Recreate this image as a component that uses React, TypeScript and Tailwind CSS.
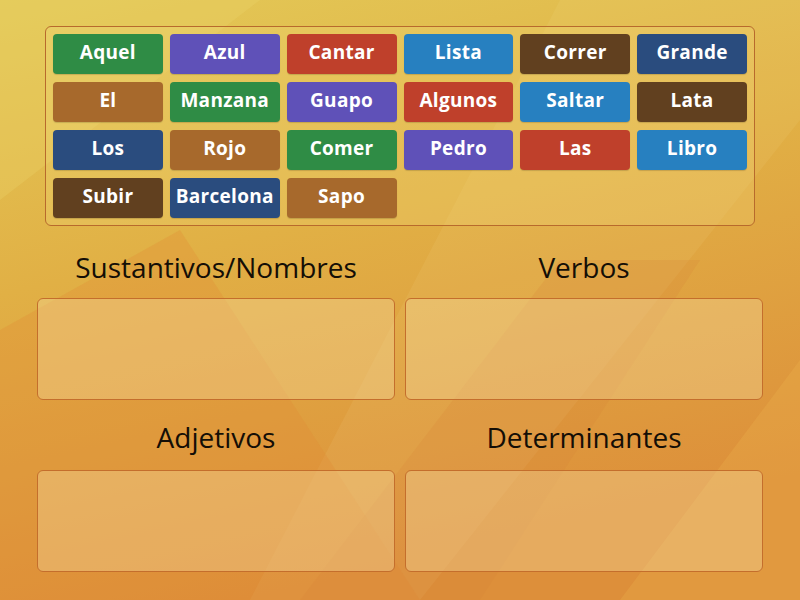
const tiles: { label: string; color: string }[] = [
  { label: 'Aquel', color: 'bg-[#2f8c45]' },
  { label: 'Azul', color: 'bg-[#5f51b8]' },
  { label: 'Cantar', color: 'bg-[#bf402b]' },
  { label: 'Lista', color: 'bg-[#2780c0]' },
  { label: 'Correr', color: 'bg-[#61401f]' },
  { label: 'Grande', color: 'bg-[#2a4c7e]' },
  { label: 'El', color: 'bg-[#a7692c]' },
  { label: 'Manzana', color: 'bg-[#2f8c45]' },
  { label: 'Guapo', color: 'bg-[#5f51b8]' },
  { label: 'Algunos', color: 'bg-[#bf402b]' },
  { label: 'Saltar', color: 'bg-[#2780c0]' },
  { label: 'Lata', color: 'bg-[#61401f]' },
  { label: 'Los', color: 'bg-[#2a4c7e]' },
  { label: 'Rojo', color: 'bg-[#a7692c]' },
  { label: 'Comer', color: 'bg-[#2f8c45]' },
  { label: 'Pedro', color: 'bg-[#5f51b8]' },
  { label: 'Las', color: 'bg-[#bf402b]' },
  { label: 'Libro', color: 'bg-[#2780c0]' },
  { label: 'Subir', color: 'bg-[#61401f]' },
  { label: 'Barcelona', color: 'bg-[#2a4c7e]' },
  { label: 'Sapo', color: 'bg-[#a7692c]' },
]

const groups = [
  ['Sustantivos/Nombres', 'Verbos'],
  ['Adjetivos', 'Determinantes'],
]

function Background() {
  return (
    <svg
      className="absolute inset-0 h-full w-full"
      viewBox="0 0 800 600"
      preserveAspectRatio="none"
    >
      <defs>
        <linearGradient id="bg" x1="0" y1="0" x2="0.3" y2="1">
          <stop offset="0" stopColor="#e3c957" />
          <stop offset="0.45" stopColor="#e1b045" />
          <stop offset="1" stopColor="#dd8f3a" />
        </linearGradient>
      </defs>
      <rect width="800" height="600" fill="url(#bg)" />
      <polygon points="560,0 800,0 800,120 420,600 250,600" fill="#fff3b0" opacity="0.08" />
      <polygon points="0,330 180,230 420,600 0,600" fill="#e08a35" opacity="0.3" />
      <polygon points="620,600 800,360 800,600" fill="#f0b850" opacity="0.25" />
      <polygon points="300,600 560,260 700,260 480,600" fill="#d98435" opacity="0.2" />
      <polygon points="0,0 260,0 0,200" fill="#ecd46a" opacity="0.3" />
    </svg>
  )
}

export default function App() {
  return (
    <div
      className="relative h-[600px] w-[800px] overflow-hidden"
      style={{ fontFamily: '"Open Sans", Lato, sans-serif' }}
    >
      <Background />
      <div className="relative pt-[26px]">
        {/* Word bank */}
        <div className="mx-[45px] rounded-[6px] border border-[#b86a2c] bg-[#f3dc80]/25 p-[7px]">
          <div className="grid grid-cols-6 gap-x-[7px] gap-y-[8px]">
            {tiles.map((t) => (
              <div
                key={t.label}
                className={`${t.color} flex h-[40px] items-center justify-center rounded-[4px] pb-[3px] text-[19px] font-bold tracking-[0.3px] text-white shadow-[0_1px_1px_rgba(0,0,0,0.15)]`}
              >
                {t.label}
              </div>
            ))}
          </div>
        </div>

        {/* Drop zones */}
        <div className="mx-[37px] grid grid-cols-2 gap-x-[10px]">
          {groups.map((row, i) => (
            row.map((title) => (
              <div key={title} className={`flex flex-col ${i === 0 ? 'mt-[24px]' : 'mt-[20px]'}`}>
                <h2
                  className={`h-[36px] text-center text-[28px] font-medium leading-[34px] text-[#140e06] ${
                    i === 0 ? 'mb-[12px]' : 'mb-[14px]'
                  }`}
                >
                  {title}
                </h2>
                <div className="h-[102px] rounded-[6px] border border-[#c46e2c] bg-[#f7dfa5]/35" />
              </div>
            ))
          ))}
        </div>
      </div>
    </div>
  )
}
